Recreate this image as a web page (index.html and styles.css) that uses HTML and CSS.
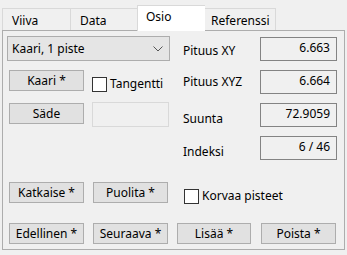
FILE: index.html
```html
<!DOCTYPE html>
<html>
<head>
    <title>Osio</title>
    <link rel="stylesheet" href="styles.css">
</head>
<body>
    <div class="tabs">
        <div class="tab">Viiva</div>
        <div class="tab">Data</div>
        <div class="tab active">Osio</div>
        <div class="tab">Referenssi</div>
    </div>
    <div class="panel">
        <div class="top">
            <div class="left">
                <div class="combo">
                    <span>Kaari, 1 piste</span>
                    <svg width="10" height="6" viewBox="0 0 10 6"><path d="M0.5 0.5 L5 5 L9.5 0.5" fill="none" stroke="#555" stroke-width="1"/></svg>
                </div>
                <div class="row row-kaari">
                    <button class="btn">Kaari *</button>
                    <label class="check"><span class="box"></span>Tangentti</label>
                </div>
                <div class="row row-sade">
                    <button class="btn">Säde</button>
                    <div class="field"></div>
                </div>
            </div>
            <div class="right">
                <div class="info"><span class="lbl-1">Pituus XY</span><div class="value">6.663</div></div>
                <div class="info"><span class="lbl-2">Pituus XYZ</span><div class="value">6.664</div></div>
                <div class="info"><span class="lbl-3">Suunta</span><div class="value">72.9059</div></div>
                <div class="info"><span class="lbl-3">Indeksi</span><div class="value">6 / 46</div></div>
            </div>
        </div>
        <div class="row row-split">
            <button class="btn">Katkaise *</button>
            <button class="btn">Puolita *</button>
            <label class="check"><span class="box"></span>Korvaa pisteet</label>
        </div>
        <div class="row row-nav">
            <button class="btn">Edellinen *</button>
            <button class="btn">Seuraava *</button>
            <button class="btn">Lisää *</button>
            <button class="btn">Poista *</button>
        </div>
    </div>
</body>
</html>
```

FILE: styles.css
```css
body {
    font-family: "Noto Sans", Arial, sans-serif;
    font-size: 12px;
    line-height: 16px;
    background-color: #f0f0f0;
    color: #000;
    margin: 0;
    padding: 0;
}

.tabs {
    display: flex;
    align-items: flex-end;
    padding: 5px 0 0 2px;
    height: 25px;
    position: relative;
    z-index: 1;
}

.tab {
    height: 22px;
    line-height: 24px;
    border: 1px solid #d9d9d9;
    border-bottom: none;
    border-right: none;
    box-sizing: border-box;
    padding-left: 8px;
    background-color: #f0f0f0;
}

.tab:nth-child(1) { width: 68px; padding-left: 9px; }
.tab:nth-child(2) { width: 67px; padding-left: 9px; }
.tab:nth-child(3) { width: 68px; }
.tab:nth-child(4) { width: 71px; border-right: 1px solid #d9d9d9; padding-left: 6px; }

.tab.active {
    background-color: #fff;
    height: 26px;
    line-height: 22px;
    margin-bottom: -1px;
}

.tab.active + .tab {
    border-left: none;
}

.panel {
    margin: 0 2px;
    height: 220px;
    border: 1px solid #adadad;
    box-sizing: border-box;
    padding: 5px 0 0 4px;
}

.top {
    display: flex;
    align-items: flex-start;
}

.left {
    width: 163px;
}

.combo {
    height: 25px;
    border: 1px solid #adadad;
    background-color: #e5e5e5;
    box-sizing: border-box;
    display: flex;
    align-items: center;
    justify-content: space-between;
    padding: 0 6px 0 4px;
}

.row {
    display: flex;
    align-items: flex-start;
}

.row-kaari {
    margin-top: 9px;
}

.row-sade {
    margin-top: 10px;
}

.row-sade .btn {
    margin-top: 1px;
}

.btn {
    font-family: inherit;
    font-size: 12px;
    line-height: 16px;
    color: #000;
    width: 75px;
    height: 21px;
    padding: 0;
    background-color: #e1e1e1;
    border: 1px solid #adadad;
    box-sizing: border-box;
    margin-left: 2px;
}

.check {
    display: flex;
    align-items: center;
    margin-left: 8px;
    margin-top: 6px;
}

.box {
    width: 15px;
    height: 15px;
    box-sizing: border-box;
    border: 1px solid #333;
    background-color: #fff;
    margin-right: 3px;
}

.field {
    width: 77px;
    height: 25px;
    box-sizing: border-box;
    border: 1px solid #d9d9d9;
    margin-left: 8px;
}

.right {
    margin-left: 13px;
    width: 154px;
    padding-top: 1px;
    display: flex;
    flex-direction: column;
    gap: 9px;
}

.info {
    display: flex;
    justify-content: space-between;
    height: 24px;
}

.info span {
    padding-top: 6px;
}

.info .lbl-2 {
    padding-top: 4px;
}

.info .lbl-3 {
    padding-top: 8px;
}

.value {
    width: 77px;
    height: 24px;
    box-sizing: border-box;
    border: 1px solid #838383;
    text-align: right;
    padding: 2px 6px 0 0;
}

.row-split {
    margin-top: 22px;
}

.row-split .btn + .btn {
    margin-left: 9px;
}

.row-split .check {
    margin-left: 16px;
    margin-top: 6px;
}

.row-nav {
    margin-top: 19px;
}

.row-nav .btn + .btn {
    margin-left: 9px;
}

.row-nav .btn:nth-child(3) {
    width: 74px;
}

.row-nav .btn:nth-child(4) {
    margin-left: 10px;
}
```
